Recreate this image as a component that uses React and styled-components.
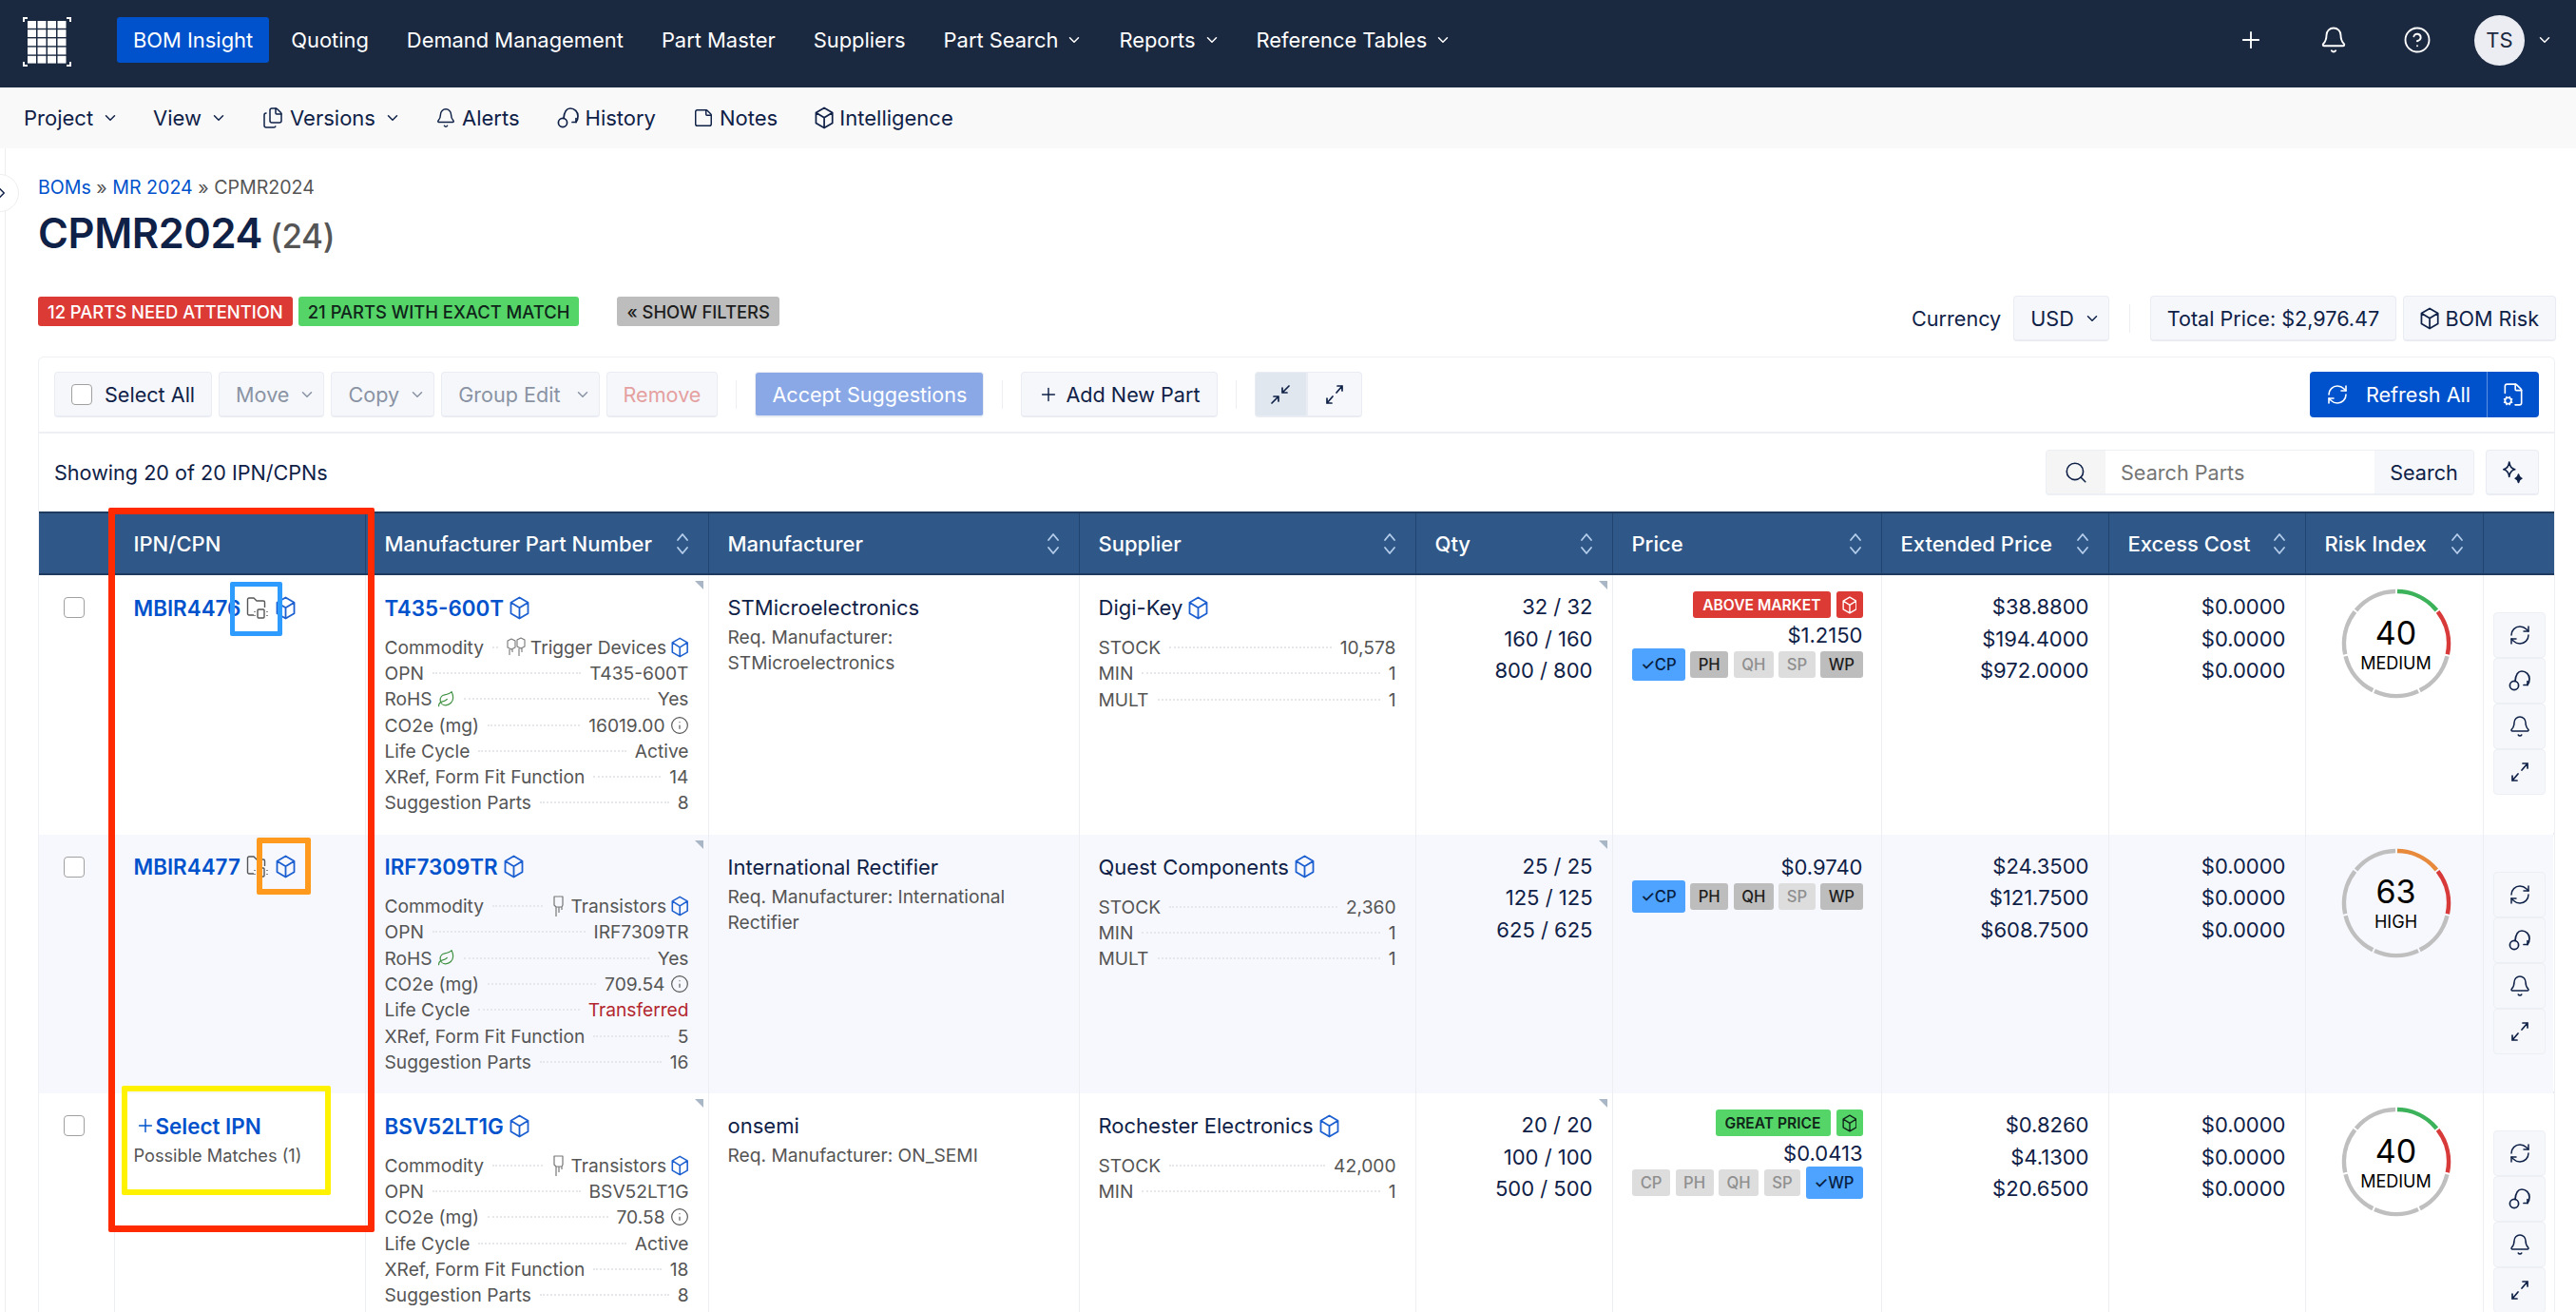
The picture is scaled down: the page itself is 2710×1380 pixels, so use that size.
import React from 'react';
import styled, { createGlobalStyle } from 'styled-components';
import { Bell, ChevronDown, ChevronRight, CircleHelp, FileCog, Files, Info, Leaf, Plus, RefreshCw, Search, StickyNote } from 'lucide-react';

const GlobalStyle = createGlobalStyle`
  html, body {
    margin: 0;
    padding: 0;
    background: #fff;
    overflow: hidden;
  }
  * { box-sizing: border-box; }
  body {
    font-family: Inter, "Liberation Sans", sans-serif;
    color: #0f2147;
  }
`;

const navy = '#0f2147';
const blue = '#0052cc';

const Page = styled.div`
  position: relative;
  width: 2710px;
  height: 1380px;
  overflow: hidden;
`;

const TopBar = styled.header`
  display: flex;
  align-items: center;
  height: 92px;
  padding: 0 24px 8px;
  background: #1a2840;
  color: #fff;
`;

const LogoWrap = styled.div`
  display: flex;
  margin: 4px 48px 0 0;
`;

const NavList = styled.nav`
  display: flex;
  align-items: center;
  gap: 6px;
  flex: 1;
`;

const NavItem = styled.div`
  display: flex;
  align-items: center;
  gap: 8px;
  height: 48px;
  padding: 0 17px;
  border-radius: 3px;
  font-size: 21.9px;
  color: #fff;
  background: ${(p) => (p.$active ? blue : 'transparent')};
`;

const NavChevron = styled(ChevronDown)`
  margin-right: -2px;
`;

const TopActions = styled.div`
  display: flex;
  align-items: center;
  gap: 58px;
`;

const AvatarGroup = styled.div`
  display: flex;
  align-items: center;
  gap: 12px;
  margin-left: -13px;
`;

const Avatar = styled.div`
  display: flex;
  align-items: center;
  justify-content: center;
  width: 53px;
  height: 53px;
  border-radius: 50%;
  background: #ebedf2;
  color: #1a2840;
  font-size: 22px;
`;

const SubNav = styled.div`
  display: flex;
  align-items: center;
  gap: 39px;
  height: 64px;
  padding-left: 25px;
  background: #f9f9f9;
`;

const SubItem = styled.div`
  display: flex;
  align-items: center;
  gap: 6px;
  font-size: 22px;
  color: ${navy};
`;

const SubChevron = styled(ChevronDown)`
  margin: 0 -3px 0 3px;
`;

const Main = styled.main`
  position: relative;
  height: 1224px;
  margin-left: 5px;
  padding: 27px 21px 0 34px;
  border-left: 1px solid #eeeeee;
`;

const RailToggle = styled.div`
  position: absolute;
  left: -26px;
  top: 27px;
  display: flex;
  align-items: center;
  justify-content: flex-end;
  width: 40px;
  height: 40px;
  padding-right: 8px;
  border: 1px solid #eeeeee;
  border-radius: 50%;
  background: #fff;
`;

const Crumbs = styled.div`
  height: 28px;
  font-size: 19.6px;
  line-height: 28px;
  color: #555;
`;

const Crumb = styled.a`
  color: ${blue};
`;

const Title = styled.h1`
  display: flex;
  align-items: baseline;
  gap: 8px;
  height: 56px;
  margin: 6px 0 0;
  font-size: 43.4px;
  font-weight: 600;
  line-height: 56px;
  letter-spacing: -0.4px;
  color: #0f2147;
`;

const TitleCount = styled.span`
  font-size: 35px;
  font-weight: 500;
  color: #555;
`;

const StatusRow = styled.div`
  display: flex;
  align-items: flex-start;
  justify-content: space-between;
  height: 47px;
  margin-top: 38px;
`;

const BadgeGroup = styled.div`
  display: flex;
  align-items: center;
  gap: 6px;
  margin-top: 1px;
`;

const StatusBadge = styled.span`
  display: flex;
  align-items: center;
  height: 31px;
  padding: 0 10px;
  border-radius: 3px;
  font-size: 18.4px;
  font-weight: 500;
  color: ${(p) => p.$text};
  background: ${(p) => p.$bg};
`;

const FilterBadge = styled(StatusBadge)`
  margin-left: 34px;
`;

const PriceGroup = styled.div`
  display: flex;
  align-items: center;
  gap: 7px;
  font-size: 21.6px;
`;

const CurrencyLabel = styled.span`
  margin-right: 6px;
`;

const PlainButton = styled.button`
  display: flex;
  align-items: center;
  justify-content: center;
  gap: ${(p) => p.$gap || 8}px;
  height: 48px;
  padding: 0 ${(p) => p.$pad || 17}px;
  border: 1px solid #e9ecf2;
  border-bottom-width: 2px;
  border-radius: 4px;
  background: ${(p) => p.$bg || '#f5f7fb'};
  color: ${(p) => p.$color || navy};
  font-family: inherit;
  font-size: 21.6px;
  white-space: nowrap;
`;

const ButtonChevron = styled(ChevronDown)`
  margin-right: -9px;
`;

const Divider = styled.span`
  width: 1px;
  height: 30px;
  margin: 0 ${(p) => p.$space || 19}px;
  background: #eceef2;
`;

const Card = styled.section`
  width: 2648px;
  margin-top: 17px;
  border: 1.5px solid #eef0f3;
  border-bottom: 0;
  border-radius: 6px 6px 0 0;
`;

const Toolbar = styled.div`
  display: flex;
  align-items: center;
  height: 80px;
  padding: 0 16px;
  border-bottom: 2px solid #eef0f3;
`;

const ButtonRow = styled.div`
  display: flex;
  align-items: center;
  gap: 7px;
`;

const Spacer = styled.div`
  flex: 1;
`;

const Check = styled.span`
  display: inline-block;
  flex: none;
  width: 22px;
  height: 22px;
  border: 1.5px solid #a0a0a0;
  border-radius: 4px;
  background: #fff;
`;

const Toggle = styled.div`
  display: flex;
`;

const ToggleButton = styled(PlainButton)`
  width: ${(p) => p.$w}px;
  padding: 0;
  border-radius: ${(p) => (p.$first ? '4px 0 0 4px' : '0 4px 4px 0')};
`;

const SplitButton = styled(PlainButton)`
  border: 0;
  background: ${blue};
  color: #fff;
  border-radius: ${(p) => (p.$first ? '4px 0 0 4px' : '0 4px 4px 0')};
  border-right: ${(p) => (p.$first ? '1px solid #5c8fdf' : '0')};
`;

const Split = styled.div`
  display: flex;
`;

const SearchRow = styled.div`
  display: flex;
  align-items: center;
  justify-content: space-between;
  height: 82px;
  padding: 0 16px;
  font-size: 21.6px;
`;

const SearchBox = styled.div`
  display: flex;
  align-items: center;
  gap: 12px;
`;

const SearchGroup = styled.div`
  display: flex;
  height: 48px;
  border: 1px solid #eceff3;
  border-bottom-width: 2px;
  border-radius: 4px;
  overflow: hidden;
`;

const SearchIconBox = styled.div`
  display: flex;
  align-items: center;
  justify-content: center;
  width: 62px;
  background: #f5f5f5;
`;

const SearchInput = styled.div`
  display: flex;
  align-items: center;
  width: 283px;
  padding-left: 16px;
  color: #757575;
  background: #fff;
`;

const SearchSubmit = styled.div`
  display: flex;
  align-items: center;
  justify-content: center;
  width: 104px;
  background: #f5f7fb;
`;

const grid = `
  display: grid;
  grid-template-columns: 79.5px 264px 361px 390px 354px 207px 283px 239px 207px 187px 73.5px;
`;

const HeaderRow = styled.div`
  ${grid}
  height: 67px;
  background: #2f5888;
  border-top: 2px solid #1e3a5f;
  border-bottom: 2px solid #1e3a5f;
`;

const HeaderCell = styled.div`
  display: flex;
  align-items: center;
  justify-content: space-between;
  padding: 0 20px;
  border-right: 1px solid #21436f;
  color: #fff;
  font-size: 22px;
  font-weight: 500;
  &:last-child {
    border-right: 0;
  }
`;

const DataRow = styled.div`
  ${grid}
  height: 272.5px;
  padding-bottom: 5.5px;
  border-bottom: 2px solid #e9ebef;
`;

const Cell = styled.div`
  position: relative;
  padding: 20px;
  border-right: 1px solid #eceef2;
  background: ${(p) => (p.$alt ? '#f6f8fd' : '#fff')};
  &:last-child {
    border-right: 0;
  }
`;

const CheckCell = styled(Cell)`
  padding: 23px 0 0 26px;
`;

const Corner = styled.span`
  position: absolute;
  top: 6px;
  right: 5px;
  width: 0;
  height: 0;
  border-left: 9px solid transparent;
  border-top: 9px solid #a9b6c6;
`;

const NameLine = styled.div`
  display: flex;
  align-items: center;
  gap: 6px;
  height: 28px;
  font-size: ${(p) => (p.$plain ? 22 : 22.4)}px;
  font-weight: ${(p) => (p.$plain ? 400 : 600)};
  color: ${(p) => (p.$plain ? navy : blue)};
  white-space: nowrap;
`;

const SelectIpn = styled(NameLine)`
  gap: 0;
  margin-left: 1px;
`;

const Matches = styled.div`
  margin-top: 4px;
  font-size: 18.2px;
  line-height: 26px;
  color: #555;
`;

const Details = styled.div`
  margin-top: ${(p) => p.$top}px;
`;

const DetailRow = styled.div`
  display: flex;
  align-items: center;
  gap: 9px;
  height: 27.3px;
  font-size: 19.2px;
  color: #555;
  white-space: nowrap;
`;

const Leader = styled.span`
  flex: 1;
  min-width: 4px;
  border-bottom: 2px dotted #e5e7eb;
`;

const LabelWithIcon = styled.span`
  display: flex;
  align-items: center;
  gap: 5px;
`;

const Value = styled.span`
  display: flex;
  align-items: center;
  gap: 5px;
  color: ${(p) => (p.$danger ? '#b3262e' : '#555')};
`;

const ReqText = styled.div`
  margin-top: 4px;
  font-size: 19.2px;
  line-height: 27px;
  color: #555;
`;

const NumberStack = styled.div`
  margin-top: -3px;
  font-size: 22px;
  line-height: 33.5px;
  text-align: right;
`;

const PriceCell = styled(Cell)`
  display: flex;
  flex-direction: column;
  align-items: flex-end;
  padding-right: 19px;
`;

const MarketRow = styled.div`
  display: flex;
  gap: 6px;
  margin: -3px 0 4px;
`;

const MarketBadge = styled.span`
  display: flex;
  align-items: center;
  justify-content: center;
  height: 28px;
  min-width: 28px;
  padding: 0 ${(p) => (p.$icon ? 0 : 10)}px;
  border-radius: 3px;
  font-size: 15.6px;
  font-weight: 600;
  color: ${(p) => (p.$good ? '#10241a' : '#fff')};
  background: ${(p) => (p.$good ? '#55d568' : '#dc3a35')};
`;

const PriceLine = styled.div`
  height: 28px;
  font-size: 22px;
  line-height: 28px;
`;

const TagRow = styled.div`
  display: flex;
  align-items: center;
  gap: 5.5px;
`;

const Tag = styled.span`
  display: flex;
  align-items: center;
  justify-content: center;
  height: ${(p) => (p.$state === 'on' ? 34 : 28)}px;
  padding: 0 ${(p) => (p.$state === 'on' ? 9 : 8.5)}px;
  border-radius: 3px;
  font-size: 16.6px;
  font-weight: 500;
  color: ${(p) => ({ on: '#08203f', dark: '#1d1d1d', off: '#8f8f8f' }[p.$state])};
  background: ${(p) => ({ on: '#4da3ff', dark: '#bdbdbd', off: '#dddddd' }[p.$state])};
`;

const GaugeCell = styled(Cell)`
  padding: 14px 0 0 37px;
`;

const GaugeWrap = styled.div`
  position: relative;
  width: 116px;
  height: 116px;
`;

const GaugeLabel = styled.div`
  position: absolute;
  inset: 0;
  display: flex;
  flex-direction: column;
  align-items: center;
  justify-content: center;
  color: #000;
  padding-top: 1px;
`;

const GaugeValue = styled.span`
  font-size: 34px;
  line-height: 40px;
`;

const GaugeText = styled.span`
  font-size: 18px;
  line-height: 24px;
`;

const ActionCell = styled(Cell)`
  padding: 39px 0 0 10.5px;
`;

const ActionButton = styled.div`
  display: flex;
  align-items: center;
  justify-content: center;
  width: 55px;
  height: 48px;
  border: 1px solid #eceff4;
  border-radius: 4px;
  background: #f5f7fb;
  color: ${navy};
`;

const Annotation = styled.div`
  position: absolute;
  left: ${(p) => p.$x}px;
  top: ${(p) => p.$y}px;
  width: ${(p) => p.$w}px;
  height: ${(p) => p.$h}px;
  border: ${(p) => p.$line}px solid ${(p) => p.$color};
  border-radius: 2px;
  pointer-events: none;
`;

// small drawings that the icon packages don't have
const Logo = () => (
  <svg width="51" height="52" viewBox="0 0 51 52" fill="none">
    <path d="M5 1H1v4M46 1h4v4M5 51H1v-4M46 51h4v-4" stroke="#fff" strokeWidth="2" />
    {[0, 1, 2, 3, 4].map((r) =>
      [0, 1, 2, 3].map((c) => <rect key={`${r}-${c}`} x={5 + c * 10.5} y={4 + r * 9.2} width="9" height="7.8" fill="#fff" />),
    )}
  </svg>
);

const LoopIcon = ({ size = 24 }) => (
  <svg width={size} height={size} viewBox="0 0 24 24" fill="none" stroke="currentColor" strokeWidth="1.7" strokeLinecap="round" strokeLinejoin="round">
    <circle cx="6" cy="17" r="4.6" />
    <path d="M7 12.400C7.500 6.500 10 2 14 2c4.500 0 8 3.500 8 8 0 3-.8 5.300-2 6.500h-4" />
    <path d="M20 12.500v4" />
  </svg>
);

const ExpandIcon = ({ size = 24 }) => (
  <svg width={size} height={size} viewBox="0 0 24 24" fill="none" stroke="currentColor" strokeWidth="1.7" strokeLinecap="round" strokeLinejoin="round">
    <path d="M14 10l6-7M15 3h5v5M10 14l-6 7M4 16v5h5" />
  </svg>
);

const CompressIcon = () => (
  <svg width="24" height="24" viewBox="0 0 24 24" fill="none" stroke="currentColor" strokeWidth="1.7" strokeLinecap="round" strokeLinejoin="round">
    <path d="M3 21l7-7M5 14h5v5M21 3l-7 7M14 5v5h5" />
  </svg>
);

const SparkIcon = () => (
  <svg width="26" height="26" viewBox="0 0 24 24" fill="none" stroke={navy} strokeWidth="1.6" strokeLinejoin="round">
    <path d="M9 2c.6 4.500 2 6.300 5.500 7C11 9.700 9.600 11.500 9 16c-.6-4.500-2-6.300-5.500-7C7 8.300 8.400 6.500 9 2z" />
    <path d="M18 14c.3 2.500 1 3.300 3 3.800-2 .5-2.700 1.300-3 3.800-.3-2.500-1-3.300-3-3.800 2-.5 2.700-1.300 3-3.800z" fill={navy} />
  </svg>
);

const SortIcon = () => (
  <svg width="14" height="26" viewBox="0 0 14 26" fill="none" stroke="#b5cdec" strokeWidth="1.8" strokeLinecap="round" strokeLinejoin="round">
    <path d="M2 9l5-6 5 6M2 17l5 6 5-6" />
  </svg>
);

const FolderIcon = () => (
  <svg width="25" height="27" viewBox="0 0 25 27" fill="none" stroke="#555" strokeWidth="1.4" strokeLinejoin="round">
    <path d="M8 21H3a1.500 1.500 0 0 1-1.500-1.500v-15A1.500 1.500 0 0 1 3 3h5l3 3h7a1.500 1.500 0 0 1 1.500 1.500V13" />
    <rect x="12" y="15" width="7" height="9" rx="1" />
    <path d="M9 17v1M9 21v1M22 17v1M22 21v1" />
  </svg>
);

const TransistorIcon = () => (
  <svg width="16" height="26" viewBox="0 0 16 26" fill="none" stroke="#777" strokeWidth="1.2" strokeLinejoin="round">
    <path d="M3 3h9v9l-1 2H5l-2-2zM5 14v10M8 14v6M11 14v3" />
  </svg>
);

const TriggerIcon = () => (
  <svg width="20" height="26" viewBox="0 0 20 26" fill="none" stroke="#777" strokeWidth="1.1" strokeLinejoin="round">
    <path d="M1 6l4-2 4 2v7l-4 2-4-2zM3 15v6M6 15v3M11 5l4-2 4 2v7l-4 2-4-2zM13 14v8M16 14v4" />
  </svg>
);

const Cube = ({ size = 25, color = '#1c5fd0' }) => (
  <svg width={size * 0.84} height={size} viewBox="0 0 21 25" fill="none" stroke={color} strokeWidth="1.8" strokeLinejoin="round">
    <path d="M10.500 1.500l9 5.200v11.600l-9 5.200-9-5.200V6.700zM1.500 6.700l9 5.600 9-5.600M10.500 12.300v11.200" />
  </svg>
);

const polar = (deg, r) => {
  const a = ((deg - 90) * Math.PI) / 180;
  return [58 + r * Math.cos(a), 58 + r * Math.sin(a)];
};

const arc = (from, to, r) => {
  const [x1, y1] = polar(from, r);
  const [x2, y2] = polar(to, r);
  return `M${x1} ${y1}A${r} ${r} 0 0 1 ${x2} ${y2}`;
};

const Gauge = ({ value, label, accent }) => (
  <GaugeWrap>
    <svg width="116" height="116" viewBox="0 0 116 116" fill="none">
      {[0, 1, 2, 3, 4, 5, 6].map((i) => {
        const step = 360 / 7;
        const colour = i === 0 ? accent : i === 1 ? '#d83a3a' : '#bfbfbf';
        return <path key={i} d={arc(i * step + 1, (i + 1) * step - 1, 55)} stroke={colour} strokeWidth="4.5" />;
      })}
    </svg>
    <GaugeLabel>
      <GaugeValue>{value}</GaugeValue>
      <GaugeText>{label}</GaugeText>
    </GaugeLabel>
  </GaugeWrap>
);

const nav = [
  ['BOM Insight', false, true],
  ['Quoting'],
  ['Demand Management'],
  ['Part Master'],
  ['Suppliers'],
  ['Part Search', true],
  ['Reports', true],
  ['Reference Tables', true],
];

const headers = ['', 'IPN/CPN', 'Manufacturer Part Number', 'Manufacturer', 'Supplier', 'Qty', 'Price', 'Extended Price', 'Excess Cost', 'Risk Index', ''];

const rows = [
  {
    ipn: 'MBIR4476',
    mpn: 'T435-600T',
    commodity: 'Trigger Devices',
    trigger: true,
    rohs: true,
    co2: '16019.00',
    cycle: 'Active',
    xref: '14',
    suggestions: '8',
    maker: 'STMicroelectronics',
    req: 'Req. Manufacturer: STMicroelectronics',
    supplier: 'Digi-Key',
    stock: [['STOCK', '10,578'], ['MIN', '1'], ['MULT', '1']],
    qty: ['32 / 32', '160 / 160', '800 / 800'],
    market: 'ABOVE MARKET',
    price: '$1.2150',
    tags: [['CP', 'on'], ['PH', 'dark'], ['QH', 'off'], ['SP', 'off'], ['WP', 'dark']],
    ext: ['$38.8800', '$194.4000', '$972.0000'],
    risk: 40,
    riskLabel: 'MEDIUM',
    accent: '#3cb35a',
  },
  {
    alt: true,
    ipn: 'MBIR4477',
    mpn: 'IRF7309TR',
    commodity: 'Transistors',
    rohs: true,
    co2: '709.54',
    cycle: 'Transferred',
    danger: true,
    xref: '5',
    suggestions: '16',
    maker: 'International Rectifier',
    req: 'Req. Manufacturer: International Rectifier',
    supplier: 'Quest Components',
    stock: [['STOCK', '2,360'], ['MIN', '1'], ['MULT', '1']],
    qty: ['25 / 25', '125 / 125', '625 / 625'],
    price: '$0.9740',
    tags: [['CP', 'on'], ['PH', 'dark'], ['QH', 'dark'], ['SP', 'off'], ['WP', 'dark']],
    ext: ['$24.3500', '$121.7500', '$608.7500'],
    risk: 63,
    riskLabel: 'HIGH',
    accent: '#e88a3c',
  },
  {
    mpn: 'BSV52LT1G',
    commodity: 'Transistors',
    co2: '70.58',
    cycle: 'Active',
    xref: '18',
    suggestions: '8',
    maker: 'onsemi',
    req: 'Req. Manufacturer: ON_SEMI',
    supplier: 'Rochester Electronics',
    stock: [['STOCK', '42,000'], ['MIN', '1']],
    qty: ['20 / 20', '100 / 100', '500 / 500'],
    market: 'GREAT PRICE',
    good: true,
    price: '$0.0413',
    tags: [['CP', 'off'], ['PH', 'off'], ['QH', 'off'], ['SP', 'off'], ['WP', 'on']],
    ext: ['$0.8260', '$4.1300', '$20.6500'],
    risk: 40,
    riskLabel: 'MEDIUM',
    accent: '#3cb35a',
  },
];

const Detail = ({ label, value, danger }) => (
  <DetailRow>
    {label}
    <Leader />
    <Value $danger={danger}>{value}</Value>
  </DetailRow>
);

const PartRow = ({ row }) => (
  <DataRow>
    <CheckCell $alt={row.alt}>
      <Check />
    </CheckCell>
    <Cell $alt={row.alt}>
      {row.ipn ? (
        <NameLine>
          {row.ipn}
          <FolderIcon />
          <Cube />
        </NameLine>
      ) : (
        <>
          <SelectIpn>
            <Plus size={22} strokeWidth={1.6} />
            Select IPN
          </SelectIpn>
          <Matches>Possible Matches (1)</Matches>
        </>
      )}
    </Cell>
    <Cell $alt={row.alt}>
      <Corner />
      <NameLine>
        {row.mpn}
        <Cube />
      </NameLine>
      <Details $top={14}>
        <Detail
          label="Commodity"
          value={
            <>
              {row.trigger ? <TriggerIcon /> : <TransistorIcon />}
              {row.commodity}
              <Cube size={22} />
            </>
          }
        />
        <Detail label="OPN" value={row.mpn} />
        {row.rohs && (
          <DetailRow>
            <LabelWithIcon>
              RoHS
              <Leaf size={19} color="#3f9142" strokeWidth={1.5} />
            </LabelWithIcon>
            <Leader />
            <Value>Yes</Value>
          </DetailRow>
        )}
        <Detail
          label="CO2e (mg)"
          value={
            <>
              {row.co2}
              <Info size={20} strokeWidth={1.4} />
            </>
          }
        />
        <Detail label="Life Cycle" value={row.cycle} danger={row.danger} />
        <Detail label="XRef, Form Fit Function" value={row.xref} />
        <Detail label="Suggestion Parts" value={row.suggestions} />
      </Details>
    </Cell>
    <Cell $alt={row.alt}>
      <NameLine $plain>{row.maker}</NameLine>
      <ReqText>{row.req}</ReqText>
    </Cell>
    <Cell $alt={row.alt}>
      <NameLine $plain>
        {row.supplier}
        <Cube />
      </NameLine>
      <Details $top={14.5}>
        {row.stock.map(([label, value]) => (
          <Detail key={label} label={label} value={value} />
        ))}
      </Details>
    </Cell>
    <Cell $alt={row.alt}>
      <Corner />
      <NumberStack>
        {row.qty.map((q) => (
          <div key={q}>{q}</div>
        ))}
      </NumberStack>
    </Cell>
    <PriceCell $alt={row.alt}>
      {row.market && (
        <MarketRow>
          <MarketBadge $good={row.good}>{row.market}</MarketBadge>
          <MarketBadge $good={row.good} $icon>
            <Cube size={19} color={row.good ? '#10241a' : '#fff'} />
          </MarketBadge>
        </MarketRow>
      )}
      <PriceLine>{row.price}</PriceLine>
      <TagRow>
        {row.tags.map(([name, state]) => (
          <Tag key={name} $state={state}>
            {state === 'on' ? `✓${name}` : name}
          </Tag>
        ))}
      </TagRow>
    </PriceCell>
    <Cell $alt={row.alt}>
      <NumberStack>
        {row.ext.map((q) => (
          <div key={q}>{q}</div>
        ))}
      </NumberStack>
    </Cell>
    <Cell $alt={row.alt}>
      <NumberStack>
        <div>$0.0000</div>
        <div>$0.0000</div>
        <div>$0.0000</div>
      </NumberStack>
    </Cell>
    <GaugeCell $alt={row.alt}>
      <Gauge value={row.risk} label={row.riskLabel} accent={row.accent} />
    </GaugeCell>
    <ActionCell $alt={row.alt}>
      <ActionButton>
        <RefreshCw size={24} strokeWidth={1.5} />
      </ActionButton>
      <ActionButton>
        <LoopIcon />
      </ActionButton>
      <ActionButton>
        <Bell size={24} strokeWidth={1.5} />
      </ActionButton>
      <ActionButton>
        <ExpandIcon />
      </ActionButton>
    </ActionCell>
  </DataRow>
);

const App = () => (
  <Page>
    <GlobalStyle />
    <TopBar>
      <LogoWrap>
        <Logo />
      </LogoWrap>
      <NavList>
        {nav.map(([label, drop, active]) => (
          <NavItem key={label} $active={active}>
            {label}
            {drop && <NavChevron size={18} />}
          </NavItem>
        ))}
      </NavList>
      <TopActions>
        <Plus size={28} strokeWidth={1.6} />
        <Bell size={30} strokeWidth={1.5} />
        <CircleHelp size={30} strokeWidth={1.5} />
        <AvatarGroup>
          <Avatar>TS</Avatar>
          <ChevronDown size={18} />
        </AvatarGroup>
      </TopActions>
    </TopBar>
    <SubNav>
      <SubItem>
        Project
        <SubChevron size={18} />
      </SubItem>
      <SubItem>
        View
        <SubChevron size={18} />
      </SubItem>
      <SubItem>
        <Files size={24} strokeWidth={1.5} />
        Versions
        <SubChevron size={18} />
      </SubItem>
      <SubItem>
        <Bell size={22} strokeWidth={1.6} />
        Alerts
      </SubItem>
      <SubItem>
        <LoopIcon />
        History
      </SubItem>
      <SubItem>
        <StickyNote size={22} strokeWidth={1.6} />
        Notes
      </SubItem>
      <SubItem>
        <Cube size={24} color={navy} />
        Intelligence
      </SubItem>
    </SubNav>
    <Main>
      <RailToggle>
        <ChevronRight size={18} />
      </RailToggle>
      <Crumbs>
        <Crumb>BOMs</Crumb> » <Crumb>MR 2024</Crumb> » CPMR2024
      </Crumbs>
      <Title>
        CPMR2024 <TitleCount>(24)</TitleCount>
      </Title>
      <StatusRow>
        <BadgeGroup>
          <StatusBadge $bg="#dc3a35" $text="#fff">12 PARTS NEED ATTENTION</StatusBadge>
          <StatusBadge $bg="#55d568" $text="#10241a">21 PARTS WITH EXACT MATCH</StatusBadge>
          <FilterBadge $bg="#bdbdbd" $text="#1d1d1d">« SHOW FILTERS</FilterBadge>
        </BadgeGroup>
        <PriceGroup>
          <CurrencyLabel>Currency</CurrencyLabel>
          <PlainButton $gap={10}>
            USD
            <ButtonChevron size={18} />
          </PlainButton>
          <Divider $space={14} />
          <PlainButton>Total Price: $2,976.47</PlainButton>
          <PlainButton $gap={6}>
            <Cube size={24} color={navy} />
            BOM Risk
          </PlainButton>
        </PriceGroup>
      </StatusRow>
      <Card>
        <Toolbar>
          <ButtonRow>
            <PlainButton $gap={13}>
              <Check />
              Select All
            </PlainButton>
            <PlainButton $color="#8a93a3" $gap={10}>
              Move
              <ButtonChevron size={18} />
            </PlainButton>
            <PlainButton $color="#8a93a3" $gap={10}>
              Copy
              <ButtonChevron size={18} />
            </PlainButton>
            <PlainButton $color="#8a93a3" $gap={14}>
              Group Edit
              <ButtonChevron size={18} />
            </PlainButton>
            <PlainButton $color="#e5a0a0">Remove</PlainButton>
          </ButtonRow>
          <Divider />
          <PlainButton $bg="#8aa8e6" $color="#fff">Accept Suggestions</PlainButton>
          <Divider />
          <PlainButton $gap={7}>
            <Plus size={22} strokeWidth={1.6} />
            Add New Part
          </PlainButton>
          <Divider />
          <Toggle>
            <ToggleButton $w={55} $first $bg="#e1e7ef">
              <CompressIcon />
            </ToggleButton>
            <ToggleButton $w={58}>
              <ExpandIcon />
            </ToggleButton>
          </Toggle>
          <Spacer />
          <Split>
            <SplitButton $first $gap={18}>
              <RefreshCw size={24} strokeWidth={1.6} />
              Refresh All
            </SplitButton>
            <SplitButton $pad={14}>
              <FileCog size={26} strokeWidth={1.5} />
            </SplitButton>
          </Split>
        </Toolbar>
        <SearchRow>
          Showing 20 of 20 IPN/CPNs
          <SearchBox>
            <SearchGroup>
              <SearchIconBox>
                <Search size={26} strokeWidth={1.5} />
              </SearchIconBox>
              <SearchInput>Search Parts</SearchInput>
              <SearchSubmit>Search</SearchSubmit>
            </SearchGroup>
            <PlainButton $pad={14}>
              <SparkIcon />
            </PlainButton>
          </SearchBox>
        </SearchRow>
        <HeaderRow>
          {headers.map((h, i) => (
            <HeaderCell key={i}>
              {h}
              {i > 1 && i < 10 && <SortIcon />}
            </HeaderCell>
          ))}
        </HeaderRow>
        {rows.map((row) => (
          <PartRow key={row.mpn} row={row} />
        ))}
      </Card>
    </Main>
    <Annotation $x={114} $y={534} $w={280} $h={762} $line={7} $color="#ff2a00" />
    <Annotation $x={242} $y={612} $w={55} $h={57} $line={5} $color="#2e9bff" />
    <Annotation $x={270} $y={881} $w={57} $h={60} $line={6} $color="#ff9a1f" />
    <Annotation $x={128} $y={1142} $w={220} $h={115} $line={6} $color="#fff200" />
  </Page>
);

export default App;
